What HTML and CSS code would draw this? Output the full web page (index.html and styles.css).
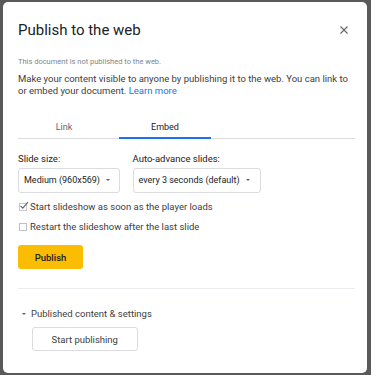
FILE: index.html
```html
<!DOCTYPE html>
<html>
<head>
<meta charset="utf-8">
<link rel="stylesheet" href="styles.css">
</head>
<body>
<div class="dialog">
  <div class="header">
    <div class="title">Publish to the web</div>
    <svg class="close" width="8" height="8" viewBox="0 0 8 8"><path d="M0.5 0.5L7.5 7.5M7.5 0.5L0.5 7.5" stroke="#5f6368" stroke-width="1.1" fill="none"/></svg>
  </div>
  <div class="notice">This document is not published to the web.</div>
  <div class="desc">Make your content visible to anyone by publishing it to the web. You can link to or embed your document. <span class="link">Learn more</span></div>
  <div class="tabs">
    <div class="tab">Link</div>
    <div class="tab active">Embed</div>
  </div>
  <div class="fields">
    <div class="field">
      <div class="label">Slide size:</div>
      <div class="select size">Medium (960x569)<span class="caret"></span></div>
    </div>
    <div class="field">
      <div class="label">Auto-advance slides:</div>
      <div class="select advance">every 3 seconds (default)<span class="caret"></span></div>
    </div>
  </div>
  <div class="check first">
    <span class="box checked"><svg width="10" height="9" viewBox="0 0 10 9"><path d="M1.5 4.8L3.8 7.2L9 1.2" stroke="#5f6368" stroke-width="1.1" fill="none"/></svg></span>
    <span>Start slideshow as soon as the player loads</span>
  </div>
  <div class="check">
    <span class="box"></span>
    <span>Restart the slideshow after the last slide</span>
  </div>
  <div class="publish">Publish</div>
  <div class="divider"></div>
  <div class="section"><span class="tri"></span>Published content &amp; settings</div>
  <div class="start">Start publishing</div>
</div>
</body>
</html>
```
FILE: styles.css
```css
html, body {
  margin: 0;
  padding: 0;
}
body {
  background: #5a5a5a;
  width: 371px;
  height: 375px;
  overflow: hidden;
  font-family: Roboto, "Liberation Sans", Arial, sans-serif;
  color: #202124;
}
.dialog {
  margin: 2px 4px 2px 3px;
  height: 371px;
  box-sizing: border-box;
  background: #fff;
  border-radius: 5px;
  padding: 17px 12px 0 15px;
}
.header {
  display: flex;
  justify-content: space-between;
  align-items: center;
  margin-top: 1.6px;
}
.title {
  font-size: 15px;
  line-height: 18px;
  color: #202124;
}
.close {
  margin-right: 7px;
  margin-top: 1px;
}
.notice {
  margin-top: 18.6px;
  font-size: 7.5px;
  line-height: 10px;
  color: #80868b;
}
.desc {
  margin-top: 6.3px;
  font-size: 9.5px;
  line-height: 12px;
  color: #3c4043;
}
.link {
  color: #1a73e8;
}
.tabs {
  margin-top: 25px;
  display: flex;
  gap: 9px;
  border-bottom: 1px solid #dadce0;
}
.tab {
  width: 92px;
  text-align: center;
  font-size: 9px;
  line-height: 11px;
  padding-bottom: 3.5px;
  color: #5f6368;
  border-bottom: 2px solid transparent;
  margin-bottom: -1px;
}
.tab.active {
  color: #202124;
  border-bottom-color: #1a73e8;
}
.fields {
  margin-top: 14px;
  display: flex;
  gap: 12.5px;
}
.label {
  font-size: 9.5px;
  line-height: 12px;
  color: #202124;
}
.select {
  margin-top: 3px;
  height: 25px;
  box-sizing: border-box;
  border: 1px solid #dadce0;
  border-radius: 3px;
  display: flex;
  align-items: center;
  padding-left: 5px;
  font-size: 9px;
  color: #202124;
}
.select.size { width: 102px; }
.select.advance { width: 128.5px; }
.caret {
  width: 0;
  height: 0;
  border-left: 2.5px solid transparent;
  border-right: 2.5px solid transparent;
  border-top: 2.5px solid #5f6368;
  margin-left: 6px;
}
.check {
  margin-top: 8px;
  display: flex;
  align-items: center;
  font-size: 9.5px;
  line-height: 12px;
  color: #3c4043;
}
.check.first {
  margin-top: 8px;
}
.box {
  width: 8px;
  height: 8px;
  border: 1px solid #bdc1c6;
  box-sizing: border-box;
  margin-left: 1px;
  margin-right: 3px;
  position: relative;
}
.box svg {
  position: absolute;
  left: -1px;
  top: -3px;
}
.box.checked {
  border-color: #c6c9cd;
}
.publish {
  margin-top: 12.2px;
  width: 65px;
  height: 24px;
  background: #fbbc04;
  border-radius: 3px;
  font-size: 9.5px;
  font-weight: 500;
  display: flex;
  align-items: center;
  justify-content: center;
  color: #202124;
}
.divider {
  margin-top: 18.5px;
  height: 1px;
  background: #e8eaed;
}
.section {
  margin-top: 19.6px;
  display: flex;
  align-items: center;
  font-size: 9.5px;
  line-height: 12px;
  color: #3c4043;
}
.tri {
  width: 0;
  height: 0;
  border-left: 2.5px solid transparent;
  border-right: 2.5px solid transparent;
  border-top: 2.5px solid #5f6368;
  margin-left: 4px;
  margin-right: 5px;
}
.start {
  margin-top: 7px;
  margin-left: 14px;
  width: 105.5px;
  height: 24px;
  box-sizing: border-box;
  border: 1px solid #dadce0;
  border-radius: 3px;
  display: flex;
  align-items: center;
  justify-content: center;
  font-size: 9.5px;
  color: #3c4043;
}
```
